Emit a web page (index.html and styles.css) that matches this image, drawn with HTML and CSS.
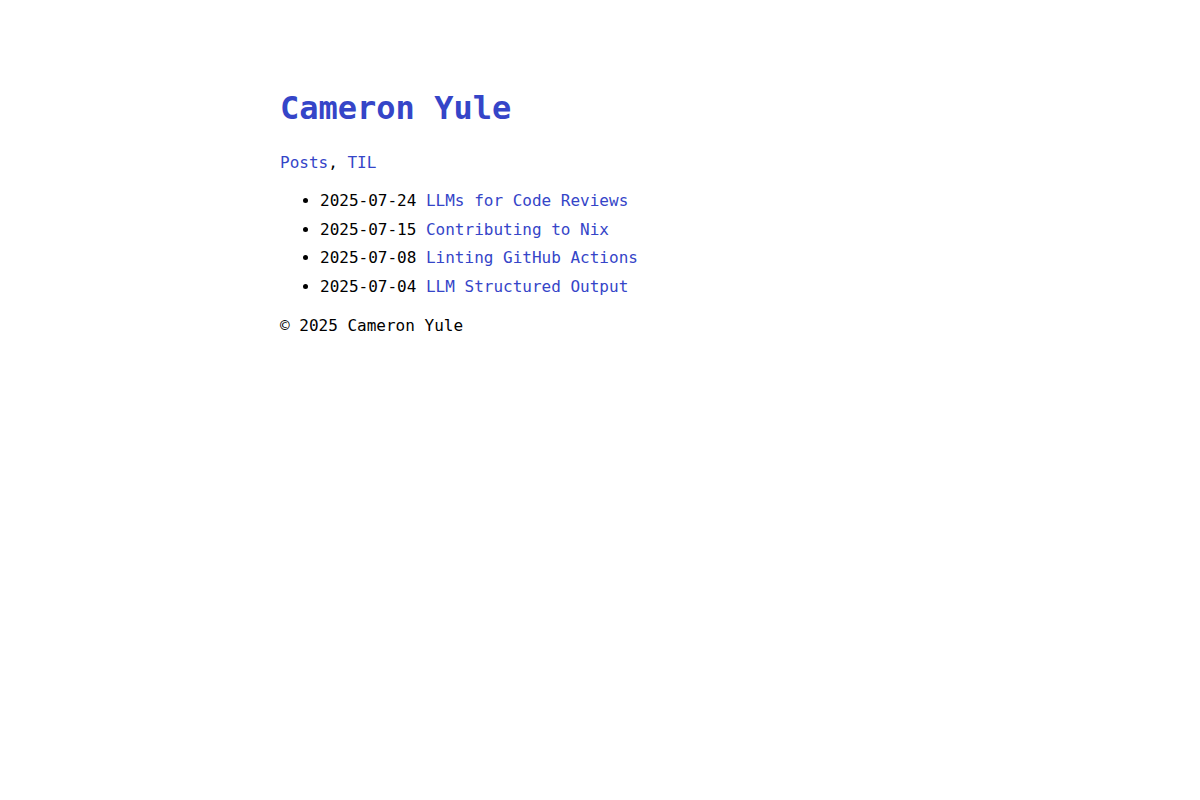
FILE: index.html
```html
<!DOCTYPE html>
<html lang="en">
<head>
<meta charset="utf-8">
<title>Cameron Yule</title>
<link rel="stylesheet" href="styles.css">
</head>
<body>
<div class="page">
  <header class="site-header">
    <h1 class="site-title"><a href="#">Cameron Yule</a></h1>
    <p class="site-nav"><a href="#">Posts</a>, <a href="#">TIL</a></p>
  </header>
  <main>
    <ul class="posts">
      <li>2025-07-24 <a href="#">LLMs for Code Reviews</a></li>
      <li>2025-07-15 <a href="#">Contributing to Nix</a></li>
      <li>2025-07-08 <a href="#">Linting GitHub Actions</a></li>
      <li>2025-07-04 <a href="#">LLM Structured Output</a></li>
    </ul>
  </main>
  <footer class="site-footer">© 2025 Cameron Yule</footer>
</div>
</body>
</html>
```
FILE: styles.css
```css
html, body {
  margin: 0;
  padding: 0;
  background: #ffffff;
}
body {
  font-family: "DejaVu Sans Mono", monospace;
  font-size: 16px;
  line-height: 28.8px;
  color: #000000;
}
.page {
  max-width: 640px;
  margin: 0 auto;
  padding-top: 89px;
}
a {
  color: #3545c8;
  text-decoration: none;
}
.site-title {
  font-size: 32px;
  line-height: 38px;
  font-weight: bold;
  margin: 0;
}
.site-nav {
  margin: 22px 0 0 0;
}
.posts {
  margin: 9px 0 0 0;
  padding-left: 40px;
}
.posts li {
  line-height: 28.8px;
}
.site-footer {
  margin-top: 10px;
}
```
